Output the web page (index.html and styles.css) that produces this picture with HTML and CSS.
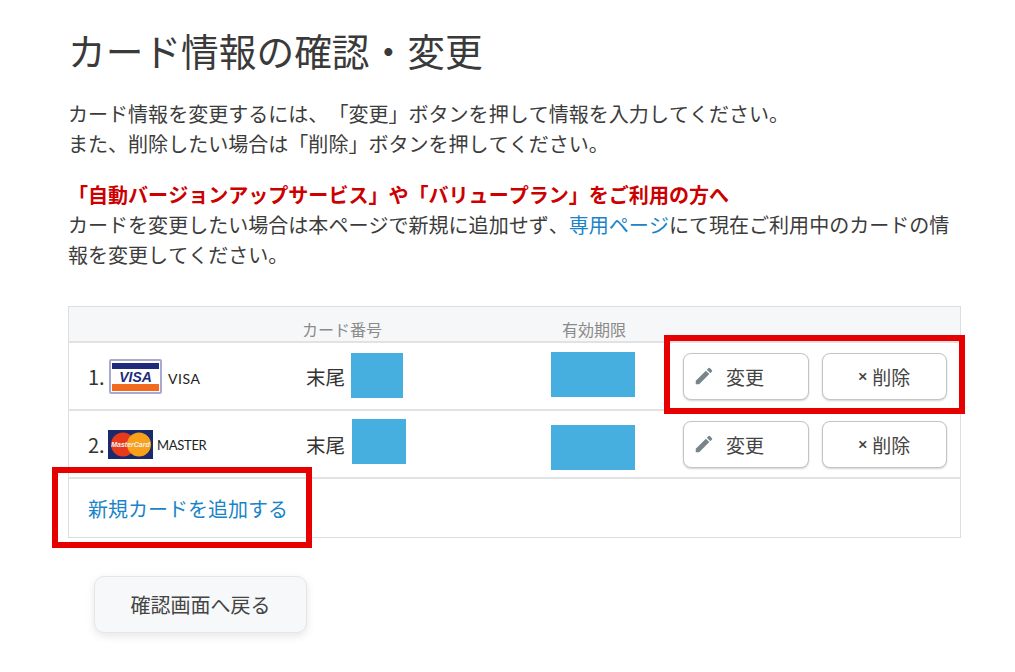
FILE: index.html
```html
<!DOCTYPE html>
<html lang="ja">
<head>
<meta charset="utf-8">
<title>カード情報の確認・変更</title>
<link rel="stylesheet" href="styles.css">
</head>
<body>
<main class="page">
  <h1 class="title">カード情報の確認・変更</h1>
  <p class="lead">カード情報を変更するには、「変更」ボタンを押して情報を入力してください。<br>また、削除したい場合は「削除」ボタンを押してください。</p>
  <div class="notice">
    <strong class="alert">「自動バージョンアップサービス」や「バリュープラン」をご利用の方へ</strong>
    <p class="notice-text">カードを変更したい場合は本ページで新規に追加せず、<a class="link" href="#">専用ページ</a>にて現在ご利用中のカードの情報を変更してください。</p>
  </div>
  <section class="cards">
    <div class="row head">
      <div class="c-brand"></div>
      <div class="c-num">カード番号</div>
      <div class="c-exp">有効期限</div>
      <div class="c-act"></div>
    </div>
    <div class="row item">
      <div class="c-brand">
        <span class="idx">1.</span>
        <svg class="visa" width="53" height="35" viewBox="0 0 53 35"><rect x="1" y="1" width="51" height="33" rx="1" fill="#fff" stroke="#a9a9cf" stroke-width="2"/><rect x="3" y="4" width="47" height="6" fill="#1f2a7c"/><rect x="3" y="25" width="47" height="7" fill="#f26a1d"/><text x="26.500" y="23" class="visa-t">VISA</text></svg>
        <span class="brand-name">VISA</span>
      </div>
      <div class="c-num num-text">末尾</div>
      <div class="c-exp"></div>
      <div class="c-act">
        <button class="btn" type="button"><svg class="pen" width="22" height="22" viewBox="0 0 24 24"><path d="M3 17.250V21h3.750L17.810 9.940l-3.750-3.750L3 17.250zM20.710 7.040a1 1 0 0 0 0-1.410l-2.340-2.340a1 1 0 0 0-1.410 0l-1.830 1.830 3.750 3.750 1.830-1.830z" fill="#78868c"/></svg><span class="lbl">変更</span></button>
        <button class="btn del" type="button"><span class="x">×</span>削除</button>
      </div>
    </div>
    <div class="row item">
      <div class="c-brand">
        <span class="idx">2.</span>
        <svg class="mc" width="45" height="29" viewBox="0 0 45 29"><rect width="45" height="29" fill="#1b2a6b"/><circle cx="15" cy="14.500" r="12" fill="#e8391d"/><circle cx="31" cy="14.500" r="12" fill="#f9a01b"/><text x="22.500" y="17" class="mc-t">MasterCard</text></svg>
        <span class="brand-name master">MASTER</span>
      </div>
      <div class="c-num num-text">末尾</div>
      <div class="c-exp"></div>
      <div class="c-act">
        <button class="btn" type="button"><svg class="pen" width="22" height="22" viewBox="0 0 24 24"><path d="M3 17.250V21h3.750L17.810 9.940l-3.750-3.750L3 17.250zM20.710 7.040a1 1 0 0 0 0-1.410l-2.340-2.340a1 1 0 0 0-1.410 0l-1.830 1.830 3.750 3.750 1.830-1.830z" fill="#78868c"/></svg><span class="lbl">変更</span></button>
        <button class="btn del" type="button"><span class="x">×</span>削除</button>
      </div>
    </div>
    <div class="add"><a class="link" href="#">新規カードを追加する</a></div>
  </section>
  <button class="back" type="button">確認画面へ戻る</button>
</main>
<div class="mask m1"></div>
<div class="mask m2"></div>
<div class="mask m3"></div>
<div class="mask m4"></div>
<div class="red r1"></div>
<div class="red r2"></div>
</body>
</html>
```
FILE: styles.css
```css
* { box-sizing: border-box; }
html, body { margin: 0; padding: 0; background: #fff; }
body {
  width: 1015px;
  height: 672px;
  overflow: hidden;
  position: relative;
  font-family: "Noto Sans CJK JP", "Noto Sans", sans-serif;
  color: #3c3c3c;
  text-spacing-trim: space-all;
  font-kerning: none;
}
.page { padding: 23px 54px 0 68px; display: flex; flex-direction: column; }
.title { margin: 0; font-size: 37.700px; font-weight: 400; line-height: 54px; color: #3a3a3a; }
.lead { margin: 22px 0 0; font-size: 20.050px; line-height: 30px; }
.notice { margin-top: 21px; font-size: 20.050px; line-height: 30px; }
.alert { display: block; color: #cc0000; font-weight: 700; }
.notice-text { margin: 0; }
.link { color: #1a84c8; text-decoration: none; }
.cards {
  margin-top: 36px;
  width: 893px;
  border: 1px solid #dedede;
  display: flex;
  flex-direction: column;
}
.row { display: grid; grid-template-columns: 226px 252px 136px 1fr; border-bottom: 2px solid #e2e2e2; }
.head { height: 36px; background: #f6f7f8; font-size: 16px; color: #8a8a8a; align-items: end; }
.head .c-num { padding-left: 7px; line-height: 24px; }
.head .c-exp { padding-left: 15px; line-height: 24px; white-space: nowrap; }
.item { height: 68px; align-items: center; }
.c-brand { display: flex; align-items: center; padding-left: 19px; }
.idx { font-size: 20px; width: 21px; color: #333; }
.visa { margin-right: 6px; }
.visa-t { font: italic 700 14px "Liberation Sans", sans-serif; fill: #1f2a7c; text-anchor: middle; }
.mc { margin: 0 4px 0 -1px; }
.mc-t { font: italic 700 7px "Liberation Sans", sans-serif; fill: #f2f2f2; text-anchor: middle; }
.brand-name { font: 14px "Lato", sans-serif; color: #222; letter-spacing: .6px; padding-top: 4px; }
.master { font-size: 13px; letter-spacing: -.3px; padding-top: 1px; }
.num-text { font-size: 19.500px; padding-left: 11px; color: #333; }
.c-act { display: flex; gap: 13px; }
.btn {
  width: 125.500px;
  height: 47px;
  border: 1px solid #c4c4c4;
  border-radius: 8px;
  background: #fff;
  box-shadow: 0 1px 2px rgba(0,0,0,.18);
  font: 400 19px "Noto Sans CJK JP", sans-serif;
  color: #444;
  display: flex;
  align-items: center;
  padding: 0 0 0 9px;
}
.pen { margin-right: 11px; }
.del { justify-content: center; padding: 0; }
.x { font: 500 17px "Roboto", sans-serif; margin-right: 5px; }
.add { height: 58px; display: flex; align-items: center; padding-left: 19px; font-size: 20px; }
.back {
  margin: 38px 0 0 26px;
  width: 213px;
  height: 57px;
  border: 1px solid #e6e6e6;
  border-radius: 10px;
  background: #f7f8fa;
  box-shadow: 0 3px 8px rgba(0,0,0,.1);
  font: 400 20px "Noto Sans CJK JP", sans-serif;
  color: #444;
}
.mask { position: absolute; background: #47aee0; }
.m1 { left: 351px; top: 353px; width: 52px; height: 45px; }
.m2 { left: 352px; top: 419px; width: 54px; height: 45px; }
.m3 { left: 551px; top: 352px; width: 84px; height: 45px; }
.m4 { left: 551px; top: 425px; width: 84px; height: 45px; }
.red { position: absolute; border: 6px solid #e60000; }
.r1 { left: 664px; top: 335px; width: 301px; height: 79px; }
.r2 { left: 52px; top: 467px; width: 260px; height: 81px; }
```
